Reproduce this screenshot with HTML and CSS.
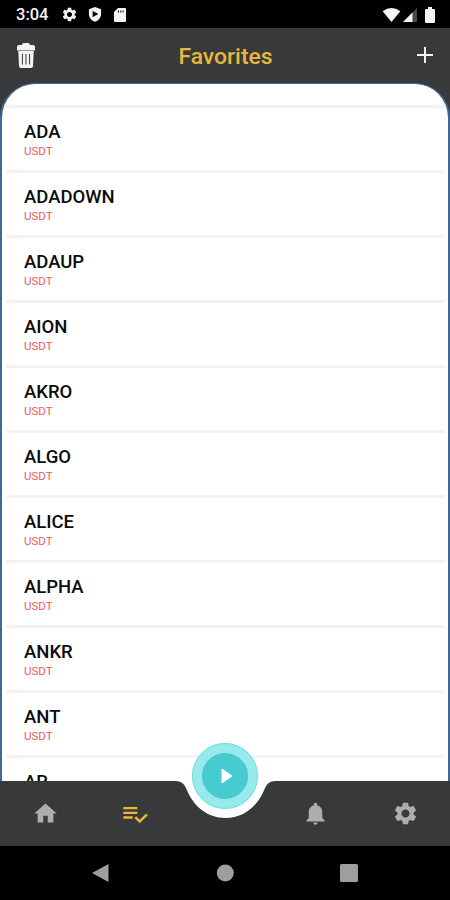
FILE: index.html
```html
<!DOCTYPE html>
<html lang="en">
<head>
<meta charset="utf-8">
<title>Favorites</title>
<link rel="stylesheet" href="styles.css">
</head>
<body>
<svg class="defs" width="0" height="0">
  <symbol id="gear" viewBox="0 0 24 24"><path d="M19.14 12.94c.04-.3.06-.61.06-.94 0-.32-.02-.64-.07-.94l2.03-1.58c.18-.14.23-.41.12-.61l-1.92-3.32c-.12-.22-.37-.29-.59-.22l-2.39.96c-.5-.38-1.03-.7-1.62-.94l-.36-2.54c-.04-.24-.24-.41-.48-.41h-3.84c-.24 0-.43.17-.47.41l-.36 2.54c-.59.24-1.13.57-1.62.94l-2.39-.96c-.22-.08-.47 0-.59.22L2.74 8.87c-.12.21-.08.47.12.61l2.03 1.58c-.05.3-.09.63-.09.94s.02.64.07.94l-2.03 1.58c-.18.14-.23.41-.12.61l1.92 3.32c.12.22.37.29.59.22l2.39-.96c.5.38 1.03.7 1.62.94l.36 2.54c.05.24.24.41.48.41h3.84c.24 0 .44-.17.47-.41l.36-2.54c.59-.24 1.13-.56 1.62-.94l2.39.96c.22.08.47 0 .59-.22l1.92-3.32c.12-.22.07-.47-.12-.61l-2.01-1.58zM12 15.6c-1.98 0-3.6-1.62-3.6-3.6s1.62-3.6 3.6-3.6 3.6 1.62 3.6 3.6-1.62 3.6-3.6 3.6z"/></symbol>
</svg>
<div class="screen">
  <div class="status">
    <span class="clock">3:04</span>
    <svg class="s-gear" viewBox="0 0 24 24"><use href="#gear"/></svg>
    <svg class="s-shield" viewBox="0 0 14 16"><path fill-rule="evenodd" d="M7 0l6.5 2.4v5.1c0 3.8-2.7 7.2-6.5 8.3C3.200 14.700.5 11.300.5 7.500V2.400zM4.500 4.200v6.600l6-3.300z"/></svg>
    <svg class="s-sd" viewBox="0 0 12 14"><path fill-rule="evenodd" d="M4 0h7q1 0 1 1v12q0 1-1 1H1q-1 0-1-1V4zM4 2.500v2h1v-2zM6.300 2.500v2h1v-2zM8.600 2.500v2h1v-2z"/></svg>
    <span class="spacer"></span>
    <svg class="s-wifi" viewBox="0 0 19 15"><path d="M0 3.500Q9.500-3.500 19 3.500L9.500 15z"/></svg>
    <svg class="s-signal" viewBox="0 0 14 14"><path d="M14 0v14H0z" opacity=".3"/><path d="M9.500 4.500V14H0z"/></svg>
    <svg class="s-battery" viewBox="0 0 10 16"><path d="M3 0h4v2h2q1 0 1 1v12q0 1-1 1H1q-1 0-1-1V3q0-1 1-1h2z"/></svg>
  </div>
  <header class="header">
    <svg class="trash" viewBox="0 0 18 25"><path fill-rule="evenodd" d="M5 2q0-2 2-2h4q2 0 2 2h3q2 0 2 2v3.500H0V4q0-2 2-2zM1.300 8h15.400l-.7 15q-.1 2-2 2H4q-2 0-2-2zM4.900 11v10.500h1V11zM8.500 11v10.500h1V11zM12.100 11v10.500h1V11z"/></svg>
    <h1>Favorites</h1>
    <svg class="plus" viewBox="0 0 16 16"><path d="M8 0v16M0 8h16"/></svg>
  </header>
  <main class="body">
    <ul class="list">
      <li class="lead"></li>
      <li><b>ADA</b><small>USDT</small></li>
      <li><b>ADADOWN</b><small>USDT</small></li>
      <li><b>ADAUP</b><small>USDT</small></li>
      <li><b>AION</b><small>USDT</small></li>
      <li><b>AKRO</b><small>USDT</small></li>
      <li><b>ALGO</b><small>USDT</small></li>
      <li><b>ALICE</b><small>USDT</small></li>
      <li><b>ALPHA</b><small>USDT</small></li>
      <li><b>ANKR</b><small>USDT</small></li>
      <li><b>ANT</b><small>USDT</small></li>
      <li><b>AR</b></li>
    </ul>
  </main>
  <nav class="tabs">
    <svg class="bar" viewBox="0 0 450 65"><path d="M0 0H176Q183 0 186 7C193 25 207 37 225.500 37S258 25 265 7Q268 0 275 0H450V65H0z"/></svg>
    <svg class="tab" viewBox="0 0 24 24"><path d="M10 20v-6h4v6h5v-8h3L12 3 2 12h3v8z"/></svg>
    <svg class="tab active" viewBox="0 0 24 24"><path d="M14 10H2v2h12v-2zm0-4H2v2h12V6zM2 16h8v-2H2v2zm19.500-4.500L23 13l-6.990 7-4.510-4.500L13 14l3.010 3 5.490-5.500z"/></svg>
    <span class="slot"><span class="fab"><svg viewBox="0 0 12 16"><path d="M1 1l10 7-10 7z"/></svg></span></span>
    <svg class="tab" viewBox="0 0 24 24"><path d="M12 22c1.100 0 2-.9 2-2h-4c0 1.100.89 2 2 2zm6-6v-5c0-3.070-1.640-5.640-4.500-6.320V4c0-.83-.67-1.500-1.500-1.500s-1.500.67-1.500 1.500v.68C7.630 5.360 6 7.920 6 11v5l-2 2v1h16v-1l-2-2z"/></svg>
    <svg class="tab" viewBox="0 0 24 24"><use href="#gear"/></svg>
  </nav>
  <footer class="system">
    <svg viewBox="0 0 18 20"><path d="M17.500 1v18L1 10z"/></svg>
    <svg viewBox="0 0 18 20"><circle cx="9.300" cy="10" r="8.500"/></svg>
    <svg viewBox="0 0 18 20"><rect y="1" width="18" height="18" rx="1.500"/></svg>
  </footer>
</div>
</body>
</html>
```
FILE: styles.css
```css
* { box-sizing: border-box; }
body { margin: 0; background: #000; font-family: Roboto, sans-serif; }
.defs { position: absolute; }
.screen { width: 450px; height: 900px; display: flex; flex-direction: column; overflow: hidden; }
.status { height: 28px; flex: none; display: flex; align-items: center; padding: 1px 15px 0 16px; background: #000; color: #f4f4f4; fill: #f4f4f4; }
.clock { width: 45px; font-size: 16.5px; font-weight: 500; line-height: 28px; }
.s-gear { width: 17px; height: 17px; }
.s-shield { width: 14px; height: 15px; margin-left: 10px; }
.s-sd { width: 12px; height: 14px; margin-left: 12px; }
.spacer { flex: 1; }
.s-wifi { width: 19px; height: 14px; }
.s-signal { width: 14px; height: 14px; margin-left: 2px; }
.s-battery { width: 10px; height: 16px; margin-left: 8px; }
.header { height: 55px; flex: none; display: flex; align-items: center; justify-content: space-between; padding: 0 17px; background: #37393b; }
.trash { width: 18px; height: 25px; margin-bottom: 1px; fill: #f4f4f4; }
.header h1 { margin: 2px 1px 0 0; font-size: 22.9px; font-weight: 500; line-height: 28px; color: #e8b73b; }
.plus { width: 16px; height: 16px; margin-bottom: 1px; fill: none; stroke: #f4f4f4; stroke-width: 2; }
.body { height: 698px; flex: none; background: #37393b; overflow: hidden; }
.list { height: 698px; margin: 0; padding: 0 3px 0 4px; list-style: none; background: #fff; border: solid #3e6899; border-width: 1px 2px 0 2px; border-radius: 35px 35px 0 0; overflow: hidden; }
.list li { height: 65px; padding: 13px 0 0 18px; border-bottom: 3px solid #f3f3f3; }
.list .lead { height: 24px; padding: 0; margin: 0 -4px; }
.list b { display: block; font-size: 18.5px; font-weight: 500; line-height: 22px; color: #0c0c0c; }
.list small { display: block; margin-top: 1px; font-size: 11.5px; line-height: 14px; color: #ee5a62; }
.tabs { height: 65px; flex: none; position: relative; display: grid; grid-template-columns: repeat(5, 1fr); place-items: center; background: #fff; }
.bar { position: absolute; inset: 0; width: 450px; height: 65px; fill: #37393b; }
.tab { position: relative; width: 27px; height: 27px; fill: #adafad; }
.active { width: 28px; height: 28px; fill: #e8b73b; }
.slot { position: relative; width: 66px; height: 65px; }
.fab { position: absolute; left: 0.4px; top: -38px; width: 66px; height: 66px; display: grid; place-items: center; border: 10px solid #97e9ec; border-radius: 50%; background: #45cbd0; outline: 1px solid #76dfdf; outline-offset: -1px; }
.fab svg { width: 12px; height: 16px; margin-left: 4px; fill: #fff; stroke: #fff; stroke-linejoin: round; }
.system { height: 54px; flex: none; display: flex; justify-content: space-between; align-items: center; padding: 0 92px 0 91px; background: #000; }
.system svg { width: 18px; height: 20px; fill: #9e9e9e; }
```
